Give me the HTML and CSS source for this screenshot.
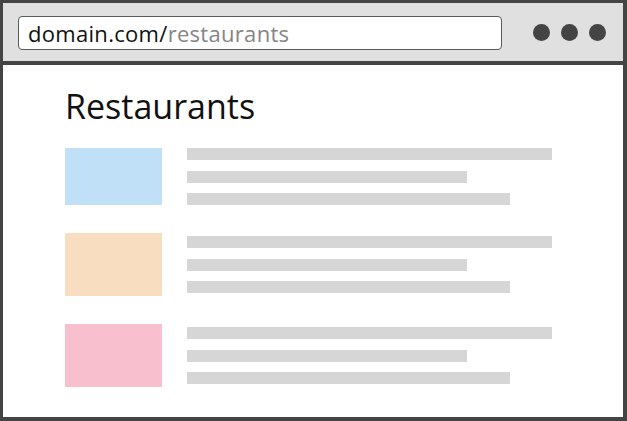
FILE: index.html
```html
<!DOCTYPE html>
<html>
<head>
<meta charset="utf-8">
<link rel="stylesheet" href="styles.css">
</head>
<body>
<div class="window">
  <div class="toolbar">
    <div class="address"><span class="domain">domain.com/</span><span class="path">restaurants</span></div>
    <div class="dots"><span class="dot"></span><span class="dot"></span><span class="dot"></span></div>
  </div>
  <div class="page">
    <h1 class="title">Restaurants</h1>
    <div class="list">
      <div class="row">
        <div class="thumb thumb-short blue"></div>
        <div class="lines"><div class="line l1"></div><div class="line l2"></div><div class="line l3"></div></div>
      </div>
      <div class="row">
        <div class="thumb orange"></div>
        <div class="lines"><div class="line l1"></div><div class="line l2"></div><div class="line l3"></div></div>
      </div>
      <div class="row">
        <div class="thumb pink"></div>
        <div class="lines"><div class="line l1"></div><div class="line l2"></div><div class="line l3"></div></div>
      </div>
    </div>
  </div>
</div>
</body>
</html>
```
FILE: styles.css
```css
html, body {
  margin: 0;
  padding: 0;
  background: #ffffff;
}
body {
  font-family: "Open Sans", "Noto Sans", sans-serif;
}
.window {
  width: 627px;
  height: 421px;
  box-sizing: border-box;
  border-style: solid;
  border-color: #444444;
  border-width: 3px 4px 4px 3px;
  display: flex;
  flex-direction: column;
  background: #ffffff;
}
.toolbar {
  height: 58px;
  background: #e0e0e0;
  border-bottom: 4px solid #444444;
  display: flex;
  align-items: center;
  padding: 0 17px 0 15px;
  box-sizing: content-box;
}
.address {
  width: 484px;
  height: 34px;
  box-sizing: border-box;
  background: #ffffff;
  border: 1px solid #5a5a5a;
  border-radius: 4px;
  display: flex;
  align-items: center;
  padding-left: 9px;
  font-size: 22px;
  letter-spacing: 0.3px;
  line-height: 1;
  margin-top: 1px;
}
.domain { color: #111111; }
.path { color: #858585; }
.dots {
  margin-left: auto;
  display: flex;
  gap: 11px;
}
.dot {
  width: 17px;
  height: 17px;
  border-radius: 50%;
  background: #444444;
}
.page {
  flex: 1;
  padding: 0 0 0 62px;
}
.title {
  margin: 20px 0 0 0;
  font-weight: 400;
  font-size: 34px;
  line-height: 42px;
  color: #111111;
}
.list {
  margin-top: 21px;
  display: flex;
  flex-direction: column;
  gap: 28px;
}
.row {
  display: flex;
  align-items: center;
  gap: 25px;
}
.thumb {
  width: 97px;
  height: 63px;
}
.thumb-short { height: 57px; }
.blue { background: #c0e0f8; }
.orange { background: #f8ddc0; }
.pink { background: #f8c0ce; }
.lines {
  display: flex;
  flex-direction: column;
  gap: 10.5px;
}
.line {
  height: 12px;
  background: #d6d6d6;
}
.l1 { width: 365px; }
.l2 { width: 280px; }
.l3 { width: 323px; }
```
